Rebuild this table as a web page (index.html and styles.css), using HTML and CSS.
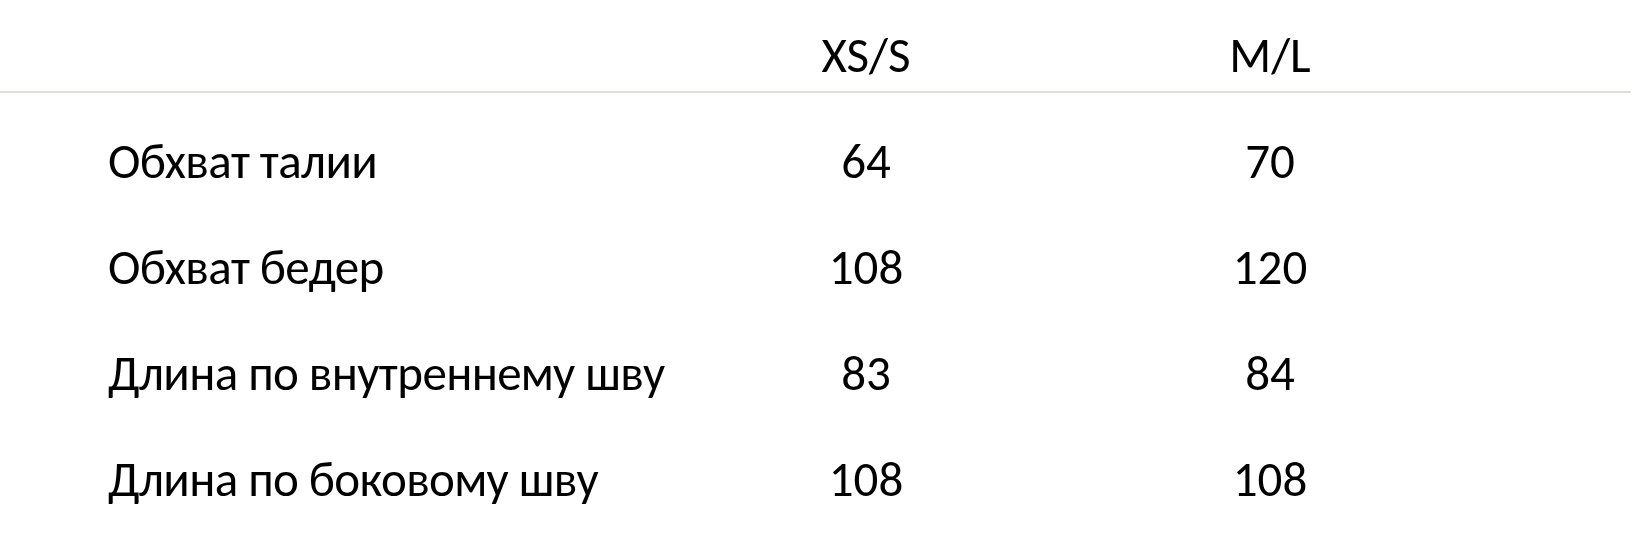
FILE: index.html
```html
<!DOCTYPE html>
<html lang="ru">
<head>
<meta charset="utf-8">
<title>Размеры</title>
<link rel="stylesheet" href="styles.css">
</head>
<body>
<div class="size-table">
  <div class="row head">
    <div class="cell label"></div>
    <div class="cell val">XS/S</div>
    <div class="cell val">M/L</div>
  </div>
  <div class="body">
    <div class="row">
      <div class="cell label">Обхват талии</div>
      <div class="cell val">64</div>
      <div class="cell val">70</div>
    </div>
    <div class="row">
      <div class="cell label">Обхват бедер</div>
      <div class="cell val">108</div>
      <div class="cell val">120</div>
    </div>
    <div class="row">
      <div class="cell label">Длина по внутреннему шву</div>
      <div class="cell val">83</div>
      <div class="cell val">84</div>
    </div>
    <div class="row">
      <div class="cell label">Длина по боковому шву</div>
      <div class="cell val">108</div>
      <div class="cell val">108</div>
    </div>
  </div>
</div>
</body>
</html>
```
FILE: styles.css
```css
html, body {
  margin: 0;
  padding: 0;
  background: #ffffff;
}
body {
  font-family: Carlito, "Open Sans", "Noto Sans", sans-serif;
  font-size: 49px;
  color: #000000;
}
.size-table {
  width: 1631px;
}
.row {
  display: grid;
  grid-template-columns: 664px 404px 404px;
}
.head {
  height: 93px;
  box-sizing: border-box;
  border-bottom: 2px solid #e2deda;
}
.head .cell {
  padding-top: 26px;
  line-height: 1.2;
}
.body {
  padding-top: 15px;
}
.body .row {
  height: 106px;
  line-height: 106px;
}
.label {
  padding-left: 108px;
  white-space: nowrap;
  letter-spacing: -0.6px;
}
.val {
  text-align: center;
}
```
